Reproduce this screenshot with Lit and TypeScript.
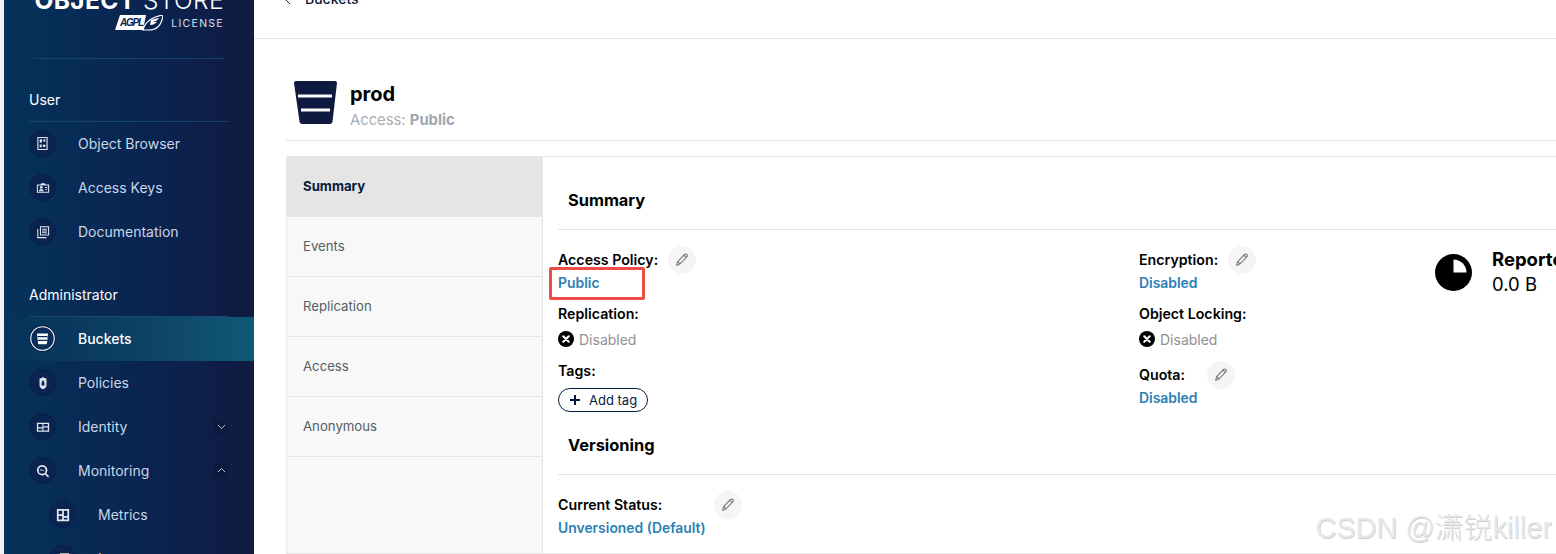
import { LitElement, html, css, svg } from "lit";
import { customElement } from "lit/decorators.js";

const pencil = html`<svg viewBox="0 0 16 16" width="15" height="15" fill="none" stroke="#808080" stroke-width="1.3" stroke-linejoin="round"><path d="M1.800 14.200l1-4 7.300-7.500c.7-.7 1.800-.7 2.500 0 .7.700.7 1.800 0 2.500l-7.300 7.500z"/><path d="M2.800 10.200l3 2.500M9.400 3.500l3 2.500"/></svg>`;
const xIcon = html`<svg viewBox="0 0 16 16" width="16" height="16"><circle cx="8" cy="8" r="8" fill="#000"/><path d="M5.300 5.300l5.400 5.400M10.700 5.300l-5.400 5.400" stroke="#fff" stroke-width="2.200" stroke-linecap="round"/></svg>`;

const I = {
  browser: svg`<path fill-rule="evenodd" d="M2.500 1h11v14h-11zM3.700 2.200v11.600h8.600V2.200z"/><path d="M5 3.500h2.500v3.500H5zM9 3.500h2V6H9zM5 9h2.200v3H5z"/><circle cx="9.800" cy="10.500" r="1.500"/>`,
  keys: svg`<path fill-rule="evenodd" d="M1 4h4l1-1.500h4L11 4h4v9.500H1zM2.200 5.200v7.100h11.600V5.200z"/><circle cx="6" cy="7.300" r="1.600"/><path d="M3.300 11.700c0-1.700 1-2.300 2.700-2.300s2.700.6 2.700 2.300zM10.300 6.800h2.700v1.100h-2.700zM10.300 9.300h2.700v1.100h-2.700z"/>`,
  docs: svg`<path fill-rule="evenodd" d="M4.500 1.500H15v10.500H4.500zM5.700 2.700v8.100h8.100V2.700z"/><path d="M7 4.300h5.500v1H7zM7 6.300h5.500v1H7zM7 8.300h5.500v1H7zM1.500 4.500h1.200v9.300H12V15H1.500z"/>`,
  policies: svg`<path fill-rule="evenodd" d="M8 .8l1.300 1.400 2.700.6v7.700c0 2.300-2 3.900-4 4.700-2-.8-4-2.400-4-4.700V2.800l2.700-.6zM6.300 7.300v3.500h3.400V7.300h-.6V6.200a1.100 1.100 0 0 0-2.200 0v1.100z"/>`,
  identity: svg`<path fill-rule="evenodd" d="M1 3h14v10.500H1zM2.500 8.300H7.300V4.500H2.500zM8.500 4.500v2.700h5V4.500zM8.500 8.500V12h5V8.500zM2.500 9.800V12h4.800V9.800z"/>`,
  monitoring: svg`<path fill-rule="evenodd" d="M7 1a6 6 0 0 1 4.700 9.700L15 14l-1.300 1.300-3.300-3.300A6 6 0 1 1 7 1zm0 2a4 4 0 1 0 0 8 4 4 0 0 0 0-8z"/><path d="M4.500 8l1.500-2 1.300 2 1-1 1.200 1" fill="none" stroke="currentColor" stroke-width=".9"/>`,
  metrics: svg`<path fill-rule="evenodd" d="M1 1h14v14H1zM3 3v4h4V3zM9 3v6h4V3zM3 9v4h4V9zM9 11v2h4v-2z"/>`,
};

const icon = (p: unknown, size = 14) => html`<svg viewBox="0 0 16 16" width=${size} height=${size} fill="currentColor">${p}</svg>`;

@customElement("nav-item")
class NavItem extends LitElement {
  static properties = { label: {}, sub: { type: Boolean }, chev: {} };
  label = "";
  sub = false;
  chev = "";
  static styles = css`
    :host { display: flex; align-items: center; box-sizing: border-box; height: 44px; padding: 0 25px 1px; color: #c8d6e8; font-size: 14px; }
    :host([sub]) { padding-left: 45px; }
    .ic { width: 27px; height: 27px; box-sizing: border-box; border-radius: 50%; background: #0b2350; border: 1px solid #0a1e48; display: flex; align-items: center; justify-content: center; color: #dfe6ef; margin-right: 22px; flex: none; }
    .l { flex: 1; }
    .chev { width: 15px; height: 15px; background: #0c1a3e; border-radius: 2px; display: flex; align-items: center; justify-content: center; }
  `;
  render() {
    return html`<div class="ic"><slot></slot></div><div class="l">${this.label}</div>
      ${this.chev ? html`<div class="chev"><svg width="9" height="9" viewBox="0 0 9 9" fill="none" stroke="#b9c6d8" stroke-width="1"><path d=${this.chev === "down" ? "M1 3l3.500 3.500L8 3" : "M1 6l3.500-3.500L8 6"} /></svg></div>` : ""}`;
  }
}

@customElement("app-root")
class AppRoot extends LitElement {
  static styles = css`
    :host { display: block; width: 1556px; height: 554px; overflow: hidden; position: relative; background: #fff; font-family: Inter, "Noto Sans", sans-serif; color: #000; }
    .page { display: flex; height: 554px; }
    .strip { width: 4px; background: #f1f1f1; flex: none; }
    .side { width: 250px; flex: none; background: linear-gradient(90deg, #05335a 0%, #0a2350 60%, #121a40 100%); overflow: hidden; }
    .logo { height: 58px; margin: 0 30px; border-bottom: 1px solid #12456f; display: flex; flex-direction: column; align-items: flex-end; overflow: hidden; }
    .os { font-size: 24.500px; line-height: 36px; margin-top: -18px; color: #fff; white-space: nowrap; font-weight: 300; letter-spacing: .4px; }
    .os b { font-weight: 700; }
    .lic { display: flex; align-items: center; gap: 8px; margin-top: -3px; }
    .lic span { font-size: 10.500px; color: #d8e0ea; letter-spacing: 1.300px; }
    .sec { color: #fff; font-size: 14px; margin: 0 25px; height: 63px; display: flex; align-items: flex-end; padding-bottom: 13px; box-sizing: border-box; border-bottom: 1px solid #12456f; }
    .sec.admin { border-color: #174a72; }
    .active { background: linear-gradient(90deg, rgba(14,90,120,0) 0%, #0f5a78 100%); color: #fff; font-weight: 500; }

    .main { flex: 1; min-width: 0; overflow: hidden; }
    .crumb { height: 38px; border-bottom: 1px solid #e6e6e6; font-size: 14px; font-weight: 500; color: #07193e; overflow: hidden; }
    .crumb div { margin-top: -10px; line-height: 17px; display: flex; align-items: center; padding-left: 30px; gap: 15px; }
    .body { padding-left: 32px; }
    .title { height: 102px; border-bottom: 1px solid #e2e2e2; display: flex; align-items: flex-start; box-sizing: border-box; padding: 42px 0 0 8px; }
    .title svg { flex: none; margin-right: 13px; }
    .t1 { font-size: 20px; font-weight: 700; line-height: 24px; margin-top: 1px; }
    .t2 { font-size: 14.800px; color: #a6adb4; line-height: 17px; margin-top: 6px; }
    .t2 b { font-weight: 700; color: #9fa7af; }
    .panel { display: flex; margin-top: 15px; height: 398px; border: 1px solid #eaeaea; border-right: 0; box-sizing: border-box; }
    .tabs { width: 255px; flex: none; background: #f8f8f8; border-right: 1px solid #e5e5e5; }
    .tab { height: 60px; box-sizing: border-box; border-bottom: 1px solid #e5e5e5; display: flex; align-items: center; padding: 0 0 2px 16px; font-size: 13.200px; color: #555e66; }
    .tab.on { background: #e5e5e5; color: #07193e; font-weight: 700; }
    .content { flex: 1; min-width: 0; padding-left: 15px; }
    .h { height: 73px; border-bottom: 1px solid #e2e2e2; display: flex; align-items: center; padding-left: 10px; padding-top: 13px; box-sizing: border-box; font-size: 16.400px; font-weight: 700; }
    .h.v { margin-top: -5px; height: 68px; padding-top: 8px; }
    .cols { display: grid; grid-template-columns: 581px 296px 200px; margin-top: 18px; }
    .col { display: flex; flex-direction: column; }
    .lab { font-size: 14.200px; font-weight: 600; height: 23px; display: flex; align-items: center; white-space: nowrap; }
    .val { font-size: 13.900px; font-weight: 600; color: #2b80b4; height: 23px; display: flex; align-items: center; white-space: nowrap; }
    .edit { width: 28px; height: 28px; border-radius: 50%; background: #f5f5f5; display: flex; align-items: center; justify-content: center; flex: none; }
    .off { display: flex; align-items: center; gap: 5px; font-size: 14px; color: #909090; height: 26px; margin-top: 1px; }
    .pill { display: inline-flex; align-items: center; box-sizing: border-box; width: 90px; height: 24px; border: 1px solid #07193e; border-radius: 12px; font-size: 13px; color: #07193e; padding: 0 0 1px 10px; gap: 8px; margin-top: 6px; }
    .rep { display: flex; gap: 20px; margin-top: -1px; }
    .rep svg { flex: none; margin-top: 7px; }
    .rep .a { font-size: 18.500px; font-weight: 700; line-height: 24px; white-space: nowrap; }
    .rep .b { font-size: 18.500px; line-height: 26px; }
    .m8 { margin-top: 8px; }
    .m7 { margin-top: 7px; }
    .m11 { margin-top: 11px; }
    .e10 { margin-left: 10px; }
    .e22 { margin-left: 22px; }
    .e52 { margin-left: 52px; }
    .ver { margin-top: 18px; }
    .redbox { position: absolute; left: 549px; top: 267px; width: 96px; height: 33px; box-sizing: border-box; border: 3px solid #ee4d45; border-radius: 2px; }
    .wm { position: absolute; right: 4px; bottom: 10px; font-family: "Liberation Sans", "Noto Sans CJK SC", sans-serif; font-size: 28.900px; font-weight: 300; line-height: 32px; color: #e6e6e6; text-shadow: .6px .6px .5px rgba(0,0,0,.2); white-space: nowrap; }
  `;

  render() {
    return html`
      <div class="page">
        <div class="strip"></div>
        <aside class="side">
          <div class="logo">
            <div class="os"><b>OBJECT</b> STORE</div>
            <div class="lic">
              <svg width="48" height="16" viewBox="0 0 48 16">
                <path d="M5 0H31L28 15H0z" fill="#fff"/>
                <text x="5" y="10.500" font-family="Liberation Sans" font-size="10" font-weight="700" font-style="italic" fill="#0a2350" textLength="24">AGPL</text>
                <path d="M28 15c2-8 9-13 20-15-1 8-5 15-14 15z" fill="none" stroke="#fff" stroke-width="1.200"/>
                <path d="M36 5c3-1 6-2 8-2-1 2-3 3-6 4 2 0 3 0 4 0-2 2-4 3-7 3z" fill="#fff"/>
              </svg>
              <span>LICENSE</span>
            </div>
          </div>
          <div class="sec">User</div>
          <nav-item label="Object Browser">${icon(I.browser, 15)}</nav-item>
          <nav-item label="Access Keys">${icon(I.keys)}</nav-item>
          <nav-item label="Documentation">${icon(I.docs)}</nav-item>
          <div class="sec admin">Administrator</div>
          <nav-item class="active" label="Buckets">
            <svg width="27" height="27" viewBox="0 0 27 27"><circle cx="13.500" cy="13.500" r="12.700" fill="#0a2d57" stroke="#fff" stroke-width="1.200"/><path d="M7.500 8h12l-1.200 11c0 .5-.4.8-.8.8h-8c-.4 0-.8-.3-.8-.8z" fill="#fff"/><path d="M8 11.500h11M8.500 15.500h10" stroke="#0a2d57" stroke-width="1.400"/></svg>
          </nav-item>
          <nav-item label="Policies">${icon(I.policies)}</nav-item>
          <nav-item label="Identity" chev="down">${icon(I.identity)}</nav-item>
          <nav-item label="Monitoring" chev="up">${icon(I.monitoring)}</nav-item>
          <nav-item sub label="Metrics">${icon(I.metrics)}</nav-item>
          <nav-item sub label="Logs">${icon(I.docs)}</nav-item>
        </aside>
        <main class="main">
          <div class="crumb"><div>
            <svg width="6" height="12" viewBox="0 0 6 12" fill="none" stroke="#07193e" stroke-width="1"><path d="M6 1L1 6l5 5"/></svg>
            <span>Buckets</span>
          </div></div>
          <div class="body">
            <div class="title">
              <svg width="43" height="43" viewBox="0 0 43 43"><path d="M2 0h39c1.300 0 2 1 2 2l-4.500 38.500c-.2 1.500-1.300 2.500-2.700 2.500H8.200c-1.400 0-2.500-1-2.700-2.500L0 2c0-1 .7-2 2-2z" fill="#0f1a40"/><path d="M4 15h34M7 29h29" stroke="#fff" stroke-width="3"/></svg>
              <div><div class="t1">prod</div><div class="t2">Access: <b>Public</b></div></div>
            </div>
            <div class="panel">
              <div class="tabs">
                <div class="tab on">Summary</div>
                <div class="tab">Events</div>
                <div class="tab">Replication</div>
                <div class="tab">Access</div>
                <div class="tab">Anonymous</div>
              </div>
              <div class="content">
                <div class="h">Summary</div>
                <div class="cols">
                  <div class="col">
                    <div class="lab">Access Policy:<span class="edit e10">${pencil}</span></div>
                    <div class="val">Public</div>
                    <div class="lab m8">Replication:</div>
                    <div class="off">${xIcon}Disabled</div>
                    <div class="lab m7">Tags:</div>
                    <div><span class="pill"><svg width="12" height="12" viewBox="0 0 12 12" stroke="#07193e" stroke-width="2"><path d="M6 1v10M1 6h10"/></svg>Add tag</span></div>
                  </div>
                  <div class="col">
                    <div class="lab">Encryption:<span class="edit e10">${pencil}</span></div>
                    <div class="val">Disabled</div>
                    <div class="lab m8">Object Locking:</div>
                    <div class="off">${xIcon}Disabled</div>
                    <div class="lab m11">Quota:<span class="edit e22">${pencil}</span></div>
                    <div class="val">Disabled</div>
                  </div>
                  <div class="col">
                    <div class="rep">
                      <svg width="37" height="37" viewBox="0 0 37 37"><circle cx="18.500" cy="18.500" r="18.500" fill="#000"/><path d="M18.500 5.500A13 13 0 0 1 31.500 18.500H18.500z" fill="#fff"/></svg>
                      <div><div class="a">Reported Usage:</div><div class="b">0.0 B</div></div>
                    </div>
                  </div>
                </div>
                <div class="h v">Versioning</div>
                <div class="ver">
                  <div class="lab">Current Status:<span class="edit e52">${pencil}</span></div>
                  <div class="val">Unversioned (Default)</div>
                </div>
              </div>
            </div>
          </div>
        </main>
      </div>
      <div class="redbox"></div>
      <div class="wm">CSDN @潇锐killer</div>
    `;
  }
}
